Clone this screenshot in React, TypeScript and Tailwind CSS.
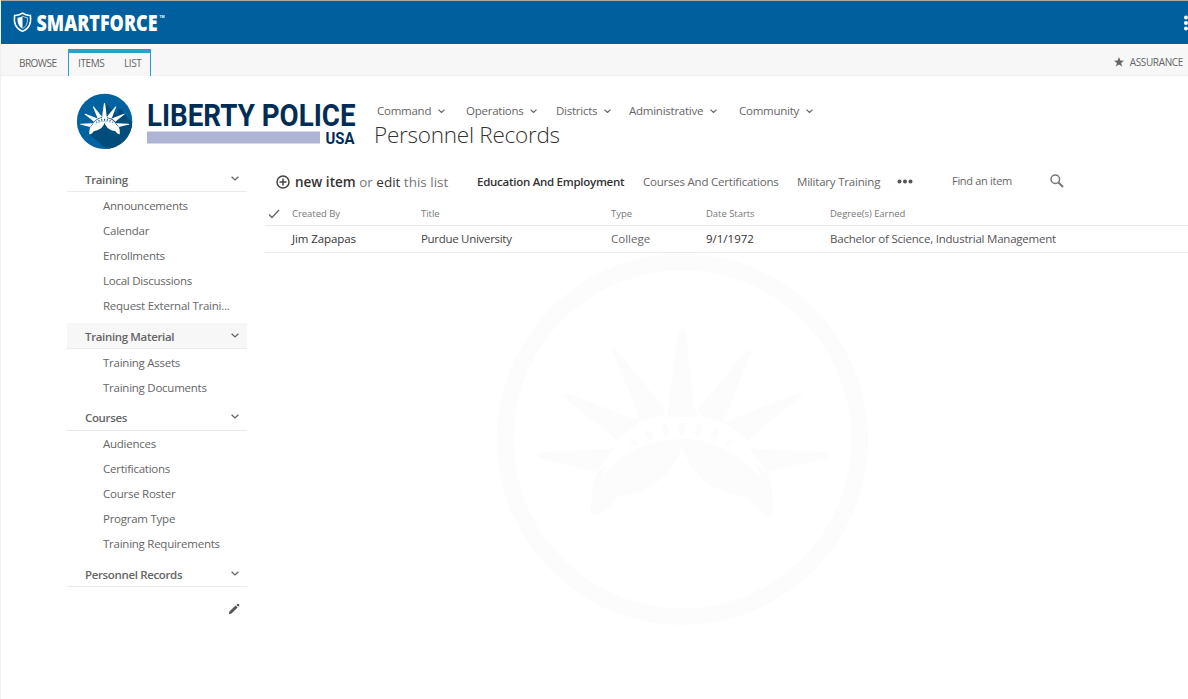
import React from "react";

const CROWN_RAYS =
  "M140 616 Q142 607 152 606 L352 597 L372 594 L320 666 L160 628 Q142 624 140 616Z " +
  "M218 434 Q222 428 234 430 L452 515 L378 572 L350 543 L230 449 Q216 440 218 434Z " +
  "M364 306 Q370 297 382 302 L528 480 L520 494 L438 520 L446 496 L376 326Z " +
  "M564 246 Q575 230 587 246 L613 470 L624 504 L532 504 L538 440Z " +
  "M788 306 Q782 297 770 302 L622 478 L630 496 L712 520 L704 508 L776 326Z " +
  "M936 434 Q932 428 920 430 L704 516 L772 572 L800 545 L922 449 Q938 440 936 434Z " +
  "M1018 616 Q1016 607 1006 606 L796 597 L776 594 L832 666 L996 628 Q1016 624 1018 616Z";

const CROWN_BASE =
  "M576 563 C470 575 380 610 320 672 C306 710 304 750 302 795 C330 800 360 775 382 740 C470 725 545 690 576 590 " +
  "C607 690 685 730 770 740 C795 772 825 800 848 795 C850 750 848 710 834 672 C775 610 690 575 576 563Z";

function Crown({ fill, band, windows }: { fill: string; band: string; windows: string }) {
  return (
    <g fill={fill}>
      <path d={CROWN_RAYS} />
      <path d={CROWN_BASE} />
      <path
        d="M340 672 C375 560 470 500 576 500 C682 500 775 560 816 690 C760 620 680 570 576 565 C480 570 385 605 340 682Z"
        fill={band}
      />
      <g fill={windows}>
        <ellipse cx="576" cy="537" rx="12" ry="20" />
        <ellipse cx="527" cy="540" rx="10" ry="20" transform="rotate(-15 527 540)" />
        <ellipse cx="625" cy="540" rx="10" ry="20" transform="rotate(15 625 540)" />
        <ellipse cx="478" cy="555" rx="10" ry="18" transform="rotate(-30 478 555)" />
        <ellipse cx="674" cy="555" rx="10" ry="18" transform="rotate(30 674 555)" />
        <ellipse cx="432" cy="576" rx="8" ry="14" transform="rotate(-45 432 576)" />
        <ellipse cx="720" cy="577" rx="8" ry="14" transform="rotate(45 720 577)" />
      </g>
    </g>
  );
}

function Chevron({ size = 8, className = "" }: { size?: number; className?: string }) {
  return (
    <svg width={size} height={size / 2 + 1} viewBox="0 0 8 5" className={className} fill="none" stroke="currentColor" strokeWidth="1.4">
      <path d="M0.6 0.7 L4 3.9 L7.4 0.7" />
    </svg>
  );
}

function TopBar() {
  return (
    <header className="flex h-[44px] items-center justify-between border-t border-[#a9a9a9] bg-[#005f9c]">
      <svg width="170" height="43" viewBox="1 1 170 43" className="overflow-visible">
        <path d="M22.5 13.2 C20 15 17.5 15.6 14.6 15.4 C13.6 22.5 15.4 28.6 22.5 31.4 C29.6 28.6 31.4 22.5 30.4 15.4 C27.5 15.6 25 15 22.5 13.2Z" fill="none" stroke="#fff" strokeWidth="1.5" />
        <path d="M22.5 16 C21 17 19.6 17.6 17.6 17.8 C17.2 22.6 18.6 26.6 22.5 28.6Z" fill="#fff" />
        <path d="M22.5 16 C24 17 25.6 17.6 27.4 17.8 C27.8 22.6 26.4 26.6 22.5 28.6" fill="none" stroke="#fff" strokeWidth="0.7" />
        <text x="36.5" y="31" textLength="121" lengthAdjust="spacingAndGlyphs" fill="#fff" className="font-['Open_Sans'] text-[22px] font-extrabold">SMARTFORCE</text>
        <text x="159.5" y="18" textLength="5" lengthAdjust="spacingAndGlyphs" fill="#fff" className="font-['Open_Sans'] text-[4px] font-bold">TM</text>
      </svg>
      <svg width="5" height="16" viewBox="0 0 5 16" fill="#fff">
        <circle cx="3" cy="2.5" r="2" />
        <circle cx="3" cy="8" r="2" />
        <circle cx="3" cy="13.5" r="2" />
      </svg>
    </header>
  );
}

function Ribbon() {
  return (
    <div className="flex h-[32px] justify-between border-b border-[#f0f0f0] bg-[#f7f7f7] text-[10px] leading-[14px] text-[#666]">
      <div className="flex">
        <span className="w-[67px] pl-[18px] pt-[12px] tracking-[-0.55px]">BROWSE</span>
        <div className="mt-[5px] flex h-[27px] w-[83px] border-x border-t-4 border-[#2ba1c9] bg-[#f7f7f7]">
          <span className="w-[46px] pl-[9px] pt-[3px] tracking-[-0.4px]">ITEMS</span>
          <span className="pl-[9px] pt-[3px] tracking-[-0.4px]">LIST</span>
        </div>
      </div>
      <div className="flex items-start pr-[5px] pt-[11px]">
        <svg width="10" height="10" viewBox="0 0 24 24" fill="#666" className="mr-[6px] mt-[2px]">
          <path d="M12 0l3.2 8.3 8.8.5-6.900 5.600 2.300 8.600L12 18.200l-7.400 4.800 2.300-8.600L0 8.800l8.800-.5z" />
        </svg>
        <span className="tracking-[-0.35px]">ASSURANCE</span>
      </div>
    </div>
  );
}

function Brand() {
  return (
    <svg width="285" height="64" viewBox="74 90 285 64" className="overflow-visible">
      <defs>
        <clipPath id="disc">
          <circle cx="104.600" cy="121.400" r="27.700" />
        </clipPath>
      </defs>
      <circle cx="104.600" cy="121.400" r="27.700" fill="#00629f" />
      <path clipPath="url(#disc)" d="M105 103 L116 114 L120 107 L127 117 L150 140 L120 160 L89 134 L105 120Z" fill="#004d7c" />
      <g transform="translate(72.300 89.700) scale(0.056)">
        <Crown fill="#fff" band="#fff" windows="#00558a" />
      </g>
      <text x="147" y="126" textLength="208.500" lengthAdjust="spacingAndGlyphs" fill="#002d56" className="font-[Roboto] text-[31.500px] font-bold">LIBERTY POLICE</text>
      <rect x="147" y="131.500" width="173" height="12" fill="#aeb4d3" />
      <text x="325.500" y="143.500" textLength="29" lengthAdjust="spacingAndGlyphs" fill="#002d56" className="font-[Roboto] text-[16.500px] font-bold">USA</text>
    </svg>
  );
}

function TopNav() {
  return (
    <nav className="flex text-[11.5px] leading-4 tracking-[-0.25px] text-[#666]">
      <span className="flex w-[89px] items-center gap-[7px]">Command <Chevron size={7} /></span>
      <span className="flex w-[90px] items-center gap-[7px]">Operations <Chevron size={7} /></span>
      <span className="flex w-[73px] items-center gap-[7px]">Districts <Chevron size={7} /></span>
      <span className="flex w-[110px] items-center gap-[7px]">Administrative <Chevron size={7} /></span>
      <span className="flex items-center gap-[7px]">Community <Chevron size={7} /></span>
    </nav>
  );
}

function Heading({ label, active = false, raised = false }: { label: string; active?: boolean; raised?: boolean }) {
  return (
    <div
      className={
        "flex h-[26px] items-start justify-between border-b border-[#eaeaea] pl-[18px] pr-[8px] text-[11.5px] font-semibold leading-4 tracking-[-0.35px] text-[#666] " +
        (raised ? "pt-[5px] " : "pt-[6px] ") +
        (active ? "bg-[#f7f7f7]" : "")
      }
    >
      {label}
      <Chevron size={8} className="mt-[4px]" />
    </div>
  );
}

function Item({ label }: { label: string }) {
  return <li className="h-[25px] pl-[36px] text-[11.5px] leading-[25px] tracking-[-0.25px] text-[#666]">{label}</li>;
}

function Sidebar() {
  return (
    <aside className="w-[180px]">
      <Heading label="Training" />
      <ul className="mb-[5px] mt-px">
        <Item label="Announcements" />
        <Item label="Calendar" />
        <Item label="Enrollments" />
        <Item label="Local Discussions" />
        <Item label="Request External Traini..." />
      </ul>
      <Heading label="Training Material" active />
      <ul className="mb-[5px] mt-px">
        <Item label="Training Assets" />
        <Item label="Training Documents" />
      </ul>
      <Heading label="Courses" raised />
      <ul className="mb-[5px]">
        <Item label="Audiences" />
        <Item label="Certifications" />
        <Item label="Course Roster" />
        <Item label="Program Type" />
        <Item label="Training Requirements" />
      </ul>
      <Heading label="Personnel Records" />
      <svg width="12" height="12" viewBox="0 0 12 12" fill="#555" className="ml-[161px] mt-4">
        <path d="M0.800 11.200 L1.400 8.400 L7.600 2.600 L9.600 4.600 L3.500 10.600Z M8.400 1.900 L9.500 0.900 Q10.100 0.500 10.700 1 L11.200 1.600 Q11.600 2.200 11.100 2.800 L10.200 3.800Z" />
      </svg>
    </aside>
  );
}

function Toolbar() {
  return (
    <div className="flex h-[34px] items-start pl-[11px] text-[11.5px] leading-4 text-[#666]">
      <svg width="14" height="14" viewBox="0 0 14 14" fill="none" stroke="#444" strokeWidth="1.500" className="mt-[9px]">
        <circle cx="7" cy="7" r="6" />
        <path d="M7 3.500V10.500M3.500 7H10.500" />
      </svg>
      <div className="ml-[5px] mt-[6px] w-[182px] whitespace-nowrap text-[13.5px] leading-5 text-[#777]">
        <span className="font-semibold text-[#333]">new item</span> or <span className="text-[#333]">edit</span> this list
      </div>
      <span className="mt-[8px] w-[166px] whitespace-nowrap font-semibold tracking-[-0.270px] text-[#333]">Education And Employment</span>
      <span className="mt-[8px] w-[154px] whitespace-nowrap tracking-[-0.22px]">Courses And Certifications</span>
      <span className="mt-[8px] w-[100px] whitespace-nowrap tracking-[-0.2px]">Military Training</span>
      <svg width="16" height="5" viewBox="0 0 16 5" fill="#555" className="mt-[13px]">
        <circle cx="2.500" cy="2.500" r="2" />
        <circle cx="8" cy="2.500" r="2" />
        <circle cx="13.500" cy="2.500" r="2" />
      </svg>
      <span className="ml-[39px] mt-[7px] w-[98px] whitespace-nowrap text-[11px] tracking-[-0.3px]">Find an item</span>
      <svg width="14" height="14" viewBox="0 0 14 14" fill="none" stroke="#777" strokeWidth="1.500" className="mt-[8px]">
        <circle cx="5.300" cy="5.300" r="4.300" />
        <path d="M8.500 8.500 L13 13" strokeWidth="2" />
      </svg>
    </div>
  );
}

function Records() {
  return (
    <div>
      <div className="flex h-[26px] items-center border-b border-[#eaeaea] pt-[2px] text-[9.500px] leading-4 tracking-[-0.04px] text-[#777]">
        <svg width="12" height="10" viewBox="0 0 12 10" fill="none" stroke="#666" strokeWidth="1.300" className="ml-[3px] mr-[12px]">
          <path d="M1 5.500 L4 8.500 L11 1" />
        </svg>
        <span className="w-[129px]">Created By</span>
        <span className="w-[190px]">Title</span>
        <span className="w-[95px]">Type</span>
        <span className="w-[124px]">Date Starts</span>
        <span>Degree(s) Earned</span>
      </div>
      <div className="flex h-[27px] items-center border-b border-[#eaeaea] pl-[27px] text-[11.500px] leading-4 tracking-[-0.22px] text-[#444]">
        <span className="w-[129px] tracking-[-0.1px] text-[#333]">Jim Zapapas</span>
        <span className="w-[190px] tracking-[-0.3px]">Purdue University</span>
        <span className="w-[95px] tracking-normal text-[#666]">College</span>
        <span className="w-[124px] tracking-normal text-[#333]">9/1/1972</span>
        <span className="text-[#555]">Bachelor of Science, Industrial Management</span>
      </div>
    </div>
  );
}

export default function App() {
  return (
    <div className="h-[699px] w-[1188px] overflow-hidden border-l border-[#f0f0f0] bg-white font-['Open_Sans','Noto_Sans',sans-serif]">
      <TopBar />
      <Ribbon />
      <div className="flex h-[90px] pl-[73px] pt-[14px]">
        <Brand />
        <div className="ml-[18px] pt-[13px]">
          <TopNav />
          <h1 className="-ml-[3px] mt-px text-[22.500px] font-light leading-[30px] tracking-[-0.25px] text-[#333]">Personnel Records</h1>
        </div>
      </div>
      <div className="flex pl-[66px]">
        <Sidebar />
        <main className="ml-[18px] grow">
          <Toolbar />
          <Records />
          <svg width="390" height="380" viewBox="0 9 1170 1140" className="ml-[225px]">
            <circle cx="577" cy="568" r="532" fill="none" stroke="#fcfcfc" strokeWidth="50" />
            <Crown fill="#fcfcfc" band="#ffffff" windows="#fcfcfc" />
          </svg>
        </main>
      </div>
    </div>
  );
}
